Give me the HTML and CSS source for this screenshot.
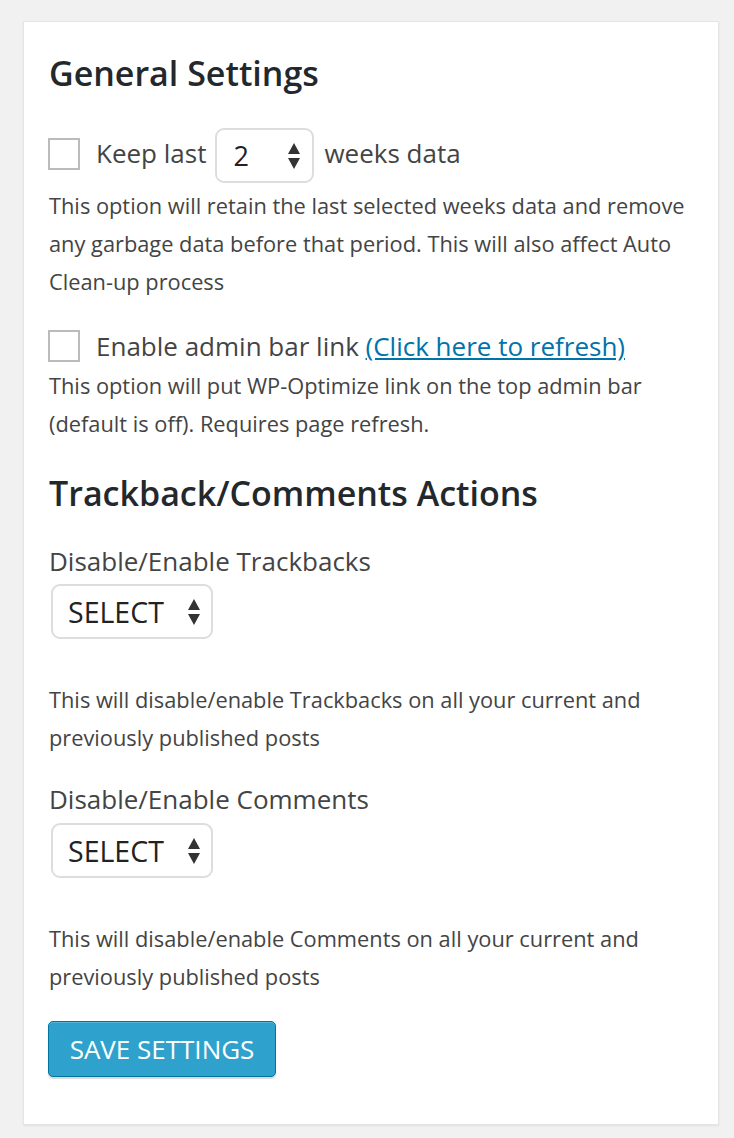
FILE: index.html
```html
<!DOCTYPE html>
<html>
<head>
<meta charset="utf-8">
<link rel="stylesheet" href="styles.css">
</head>
<body>
<div class="card">
  <h2 class="title">General Settings</h2>

  <div class="row row-weeks">
    <span class="checkbox"></span>
    <span class="label">Keep last</span>
    <div class="select select-num">
      <span class="select-text">2</span>
      <svg class="arrows" width="12" height="26" viewBox="0 0 12 26"><polygon points="6,0 12,11 0,11"/><polygon points="0,15 12,15 6,26"/></svg>
    </div>
    <span class="label">weeks data</span>
  </div>
  <p class="desc desc-first">This option will retain the last selected weeks data and remove any garbage data before that period. This will also affect Auto Clean-up process</p>

  <div class="row row-admin">
    <span class="checkbox"></span>
    <span class="label">Enable admin bar link <a class="link" href="#">(Click here to refresh)</a></span>
  </div>
  <p class="desc desc-admin">This option will put WP-Optimize link on the top admin bar (default is off). Requires page refresh.</p>

  <h2 class="title title-second">Trackback/Comments Actions</h2>

  <div class="label field-label first-label">Disable/Enable Trackbacks</div>
  <div class="select select-wide">
    <span class="select-text">SELECT</span>
    <svg class="arrows" width="12" height="26" viewBox="0 0 12 26"><polygon points="6,0 12,11 0,11"/><polygon points="0,15 12,15 6,26"/></svg>
  </div>
  <p class="desc desc-action">This will disable/enable Trackbacks on all your current and previously published posts</p>

  <div class="label field-label second-label">Disable/Enable Comments</div>
  <div class="select select-wide">
    <span class="select-text">SELECT</span>
    <svg class="arrows" width="12" height="26" viewBox="0 0 12 26"><polygon points="6,0 12,11 0,11"/><polygon points="0,15 12,15 6,26"/></svg>
  </div>
  <p class="desc desc-action">This will disable/enable Comments on all your current and previously published posts</p>

  <button class="button" type="button">SAVE SETTINGS</button>
</div>
</body>
</html>
```

FILE: styles.css
```css
html, body {
  margin: 0;
  padding: 0;
  background: #f1f1f1;
}
body {
  padding: 21px 15px 14px 23px;
  font-family: "Open Sans", "Noto Sans", sans-serif;
  color: #444;
}
.card {
  box-sizing: border-box;
  width: 696px;
  background: #fff;
  border: 1px solid #e5e5e5;
  box-shadow: 0 1px 2px rgba(0,0,0,0.07);
  padding: 31px 25px 47px 25px;
}
.title {
  margin: 0;
  font-size: 34px;
  line-height: 40px;
  font-weight: 600;
  color: #23282d;
}
.title-second {
  margin-top: 30px;
}
.row {
  display: flex;
  align-items: center;
}
.row-weeks {
  margin-top: 35px;
  height: 55px;
}
.row-weeks .label {
  margin-top: -5px;
}
.row-admin {
  margin-top: 29px;
  height: 32px;
}
.checkbox {
  width: 28px;
  height: 28px;
  border: 2px solid #bbb;
  margin-left: -1px;
  margin-right: 16px;
  flex: none;
}
.row-weeks .checkbox {
  margin-top: -4px;
}
.label {
  font-size: 26px;
  line-height: 32px;
  color: #444;
}
.link {
  color: #0073aa;
  text-decoration: underline;
}
.select {
  box-sizing: border-box;
  height: 55px;
  border: 2px solid #ddd;
  border-radius: 9px;
  background: #fff;
  display: flex;
  align-items: center;
  justify-content: space-between;
  color: #222;
  font-size: 27px;
}
.select-wide .select-text {
  font-size: 28.5px;
}
.select-num {
  width: 99px;
  margin: 0 10px 0 9px;
  padding: 0 12px 0 16px;
}
.select-wide {
  width: 162px;
  margin-left: 2px;
  padding: 0 11px 0 15px;
}
.first-label + .select {
  margin-top: 7px;
}
.second-label + .select {
  margin-top: 8px;
}
.arrows {
  fill: #333;
  flex: none;
}
.desc {
  margin: 0;
  font-size: 21.8px;
  line-height: 38px;
  color: #444;
}
.desc-first {
  margin-top: 4px;
}
.desc-admin {
  margin-top: 5px;
}
.desc-action {
  margin-top: 42px;
}
.first-label {
  margin-top: 32px;
}
.second-label {
  margin-top: 26px;
}
.button {
  display: block;
  margin-top: 25px;
  margin-left: -1px;
  width: 228px;
  height: 56px;
  box-sizing: border-box;
  background: #2ea2cc;
  border: 1px solid #0074a2;
  border-radius: 5px;
  box-shadow: inset 0 1px 0 rgba(120,200,230,0.5), 0 2px 1px rgba(0,0,0,0.15);
  color: #fff;
  font-family: "Open Sans", "Noto Sans", sans-serif;
  font-size: 26px;
  padding: 0;
  text-align: center;
}
```
